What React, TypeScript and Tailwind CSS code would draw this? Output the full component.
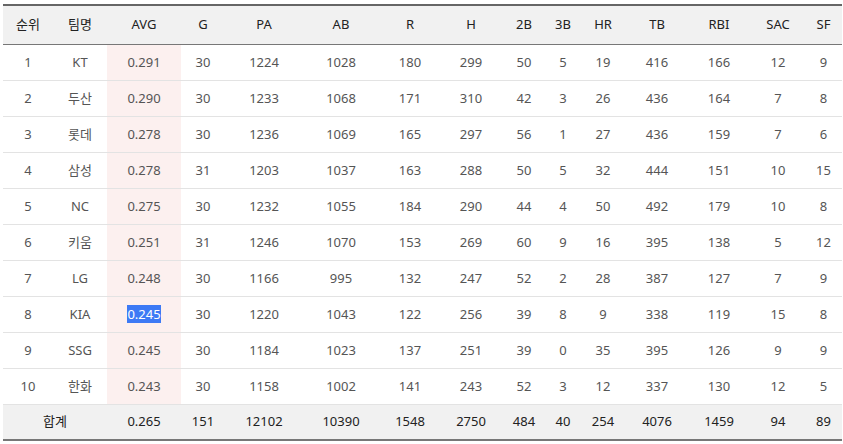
import React from "react";

const cols = [50, 54, 74, 44, 78, 76, 62, 60, 46, 32, 48, 60, 64, 54, 37];
const headers = ["순위", "팀명", "AVG", "G", "PA", "AB", "R", "H", "2B", "3B", "HR", "TB", "RBI", "SAC", "SF"];
const rows: (string | number)[][] = [
  [1, "KT", "0.291", 30, 1224, 1028, 180, 299, 50, 5, 19, 416, 166, 12, 9],
  [2, "두산", "0.290", 30, 1233, 1068, 171, 310, 42, 3, 26, 436, 164, 7, 8],
  [3, "롯데", "0.278", 30, 1236, 1069, 165, 297, 56, 1, 27, 436, 159, 7, 6],
  [4, "삼성", "0.278", 31, 1203, 1037, 163, 288, 50, 5, 32, 444, 151, 10, 15],
  [5, "NC", "0.275", 30, 1232, 1055, 184, 290, 44, 4, 50, 492, 179, 10, 8],
  [6, "키움", "0.251", 31, 1246, 1070, 153, 269, 60, 9, 16, 395, 138, 5, 12],
  [7, "LG", "0.248", 30, 1166, 995, 132, 247, 52, 2, 28, 387, 127, 7, 9],
  [8, "KIA", "0.245", 30, 1220, 1043, 122, 256, 39, 8, 9, 338, 119, 15, 8],
  [9, "SSG", "0.245", 30, 1184, 1023, 137, 251, 39, 0, 35, 395, 126, 9, 9],
  [10, "한화", "0.243", 30, 1158, 1002, 141, 243, 52, 3, 12, 337, 130, 12, 5],
];
const totals = ["0.265", 151, 12102, 10390, 1548, 2750, 484, 40, 254, 4076, 1459, 94, 89];

export default function App() {
  return (
    <div
      className="w-[843px] h-[444px] bg-white pt-[4px] pl-[3px]"
      style={{ fontFamily: '"Noto Sans", "Noto Sans CJK KR", sans-serif' }}
    >
      <table className="border-collapse table-fixed w-[838px] text-[13px]">
        <colgroup>
          {cols.map((w, i) => (
            <col key={i} style={{ width: w }} />
          ))}
        </colgroup>
        <thead>
          <tr className="bg-[#f1f1f1] border-t-2 border-t-[#666666] border-b border-b-[#777777]">
            {headers.map((h) => (
              <th key={h} className="h-[39px] p-0 font-normal text-[#222222] text-center align-middle">
                {h}
              </th>
            ))}
          </tr>
        </thead>
        <tbody>
          {rows.map((r, ri) => (
            <tr key={ri} className="border-b border-b-[#e3e3e3]">
              {r.map((c, ci) => (
                <td
                  key={ci}
                  className={
                    "h-[36px] p-0 pt-px text-center align-middle text-[#555555] " +
                    (ci === 2 ? "bg-[#fcf0ef]" : "")
                  }
                >
                  {ri === 7 && ci === 2 ? (
                    <span className="bg-[#3d7af5] text-white">{c}</span>
                  ) : (
                    c
                  )}
                </td>
              ))}
            </tr>
          ))}
          <tr className="bg-[#f1f1f1] border-b-2 border-b-[#777777]">
            <td colSpan={2} className="h-[36px] p-0 text-center align-middle text-[#222222]">
              합계
            </td>
            {totals.map((t, i) => (
              <td key={i} className="h-[36px] p-0 text-center align-middle text-[#222222]">
                {t}
              </td>
            ))}
          </tr>
        </tbody>
      </table>
    </div>
  );
}
